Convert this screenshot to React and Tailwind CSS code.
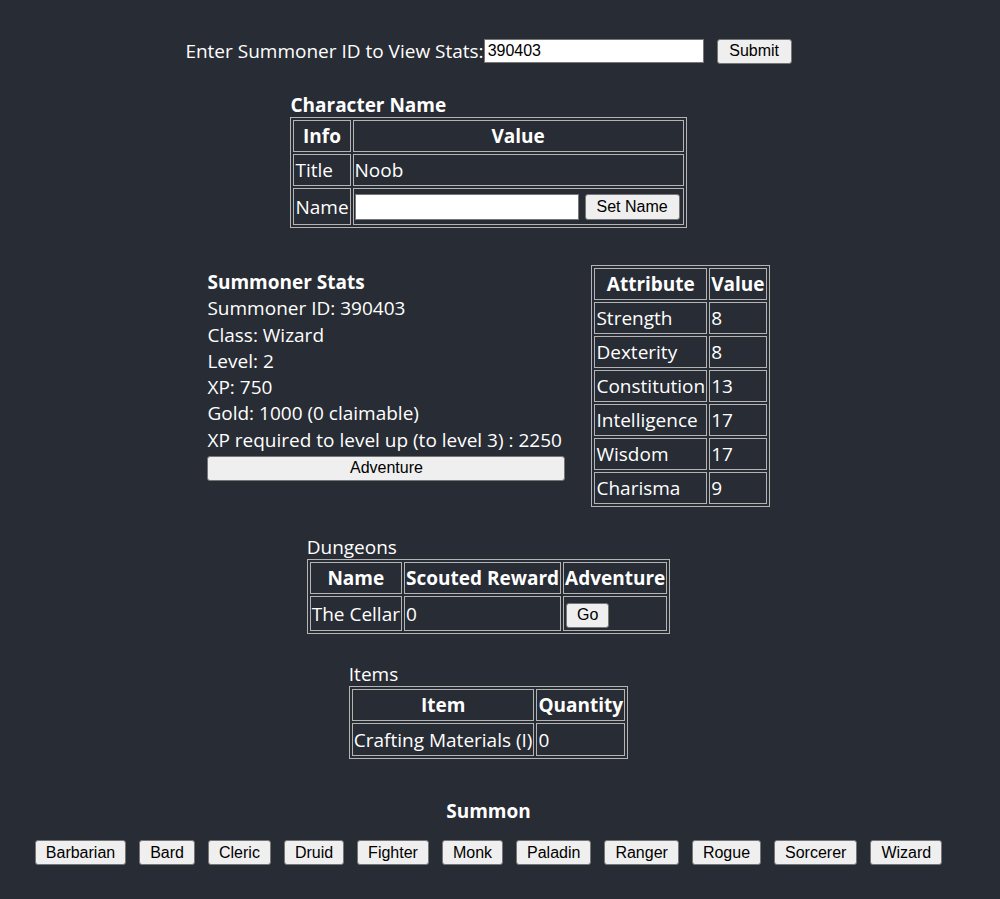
const body = '[font-family:"Open_Sans","Noto_Sans",sans-serif]'
const btnFont = '[font-family:"Liberation_Sans",Arial,sans-serif]'

function Btn({ children, className = '' }) {
  return (
    <button
      className={`h-[25px] px-[10px] bg-[#efefef] text-black text-[16px] leading-none border border-[#767676] rounded-[3px] ${btnFont} ${className}`}
    >
      {children}
    </button>
  )
}

function Th({ children, className = '' }) {
  return <th className={`border border-[#b4b4b4] p-[1px] h-[32px] font-bold ${className}`}>{children}</th>
}

function Td({ children, className = '' }) {
  return <td className={`border border-[#b4b4b4] p-[1px] h-[32px] text-left ${className}`}>{children}</td>
}

function Table({ children }) {
  return (
    <table className="border border-[#b4b4b4] border-separate border-spacing-[2px] leading-[28px]">
      <tbody>{children}</tbody>
    </table>
  )
}

const attributes = [
  ['Strength', 8],
  ['Dexterity', 8],
  ['Constitution', 13],
  ['Intelligence', 17],
  ['Wisdom', 17],
  ['Charisma', 9],
]

const classes = ['Barbarian', 'Bard', 'Cleric', 'Druid', 'Fighter', 'Monk', 'Paladin', 'Ranger', 'Rogue', 'Sorcerer', 'Wizard']

export default function App() {
  return (
    <div className={`bg-[#282c34] min-h-screen text-white text-[19px] ${body}`}>
      <div className="w-[977px] flex flex-col items-center pt-[39px] pb-[35px]">
        {/* Lookup form */}
        <div className="flex items-center h-[24px]">
          <span>Enter Summoner ID to View Stats:</span>
          <input
            defaultValue="390403"
            className={`w-[220px] h-[24px] bg-white text-black text-[16px] px-[3px] border border-[#767676] outline-none ${btnFont}`}
          />
          <Btn className="ml-[13px] w-[75px]">Submit</Btn>
        </div>

        {/* Character name */}
        <div className="mt-[30px]">
          <div className="font-bold leading-[24px]">Character Name</div>
          <Table>
            <tr>
              <Th>Info</Th>
              <Th>Value</Th>
            </tr>
            <tr>
              <Td>Title</Td>
              <Td>Noob</Td>
            </tr>
            <tr>
              <Td className="h-[37px]">Name</Td>
              <Td className="h-[37px]">
                <div className="flex items-center gap-[6px] pr-[2px]">
                  <input className="w-[224px] h-[26px] bg-white border border-[#767676] outline-none" />
                  <Btn className="w-[95px] h-[26px]">Set Name</Btn>
                </div>
              </Td>
            </tr>
          </Table>
        </div>

        {/* Stats and attributes */}
        <div className="mt-[37px] flex items-start gap-[26px]">
          <div className="mt-[4px] w-[358px] leading-[26.3px]">
            <div className="font-bold">Summoner Stats</div>
            <div>Summoner ID: 390403</div>
            <div>Class: Wizard</div>
            <div>Level: 2</div>
            <div>XP: 750</div>
            <div>Gold: 1000 (0 claimable)</div>
            <div className="whitespace-nowrap">XP required to level up (to level 3) : 2250</div>
            <Btn className="w-full h-[24px]">Adventure</Btn>
          </div>
          <Table>
            <tr>
              <Th>Attribute</Th>
              <Th>Value</Th>
            </tr>
            {attributes.map(([name, value]) => (
              <tr key={name}>
                <Td>{name}</Td>
                <Td>{value}</Td>
              </tr>
            ))}
          </Table>
        </div>

        {/* Dungeons */}
        <div className="mt-[28px]">
          <div className="leading-[24px]">Dungeons</div>
          <Table>
            <tr>
              <Th>Name</Th>
              <Th>Scouted Reward</Th>
              <Th>Adventure</Th>
            </tr>
            <tr>
              <Td className="h-[35px]">The Cellar</Td>
              <Td className="h-[35px]">0</Td>
              <Td className="h-[35px]">
                <Btn className="ml-[1px] w-[43px] h-[25px]">Go</Btn>
              </Td>
            </tr>
          </Table>
        </div>

        {/* Items */}
        <div className="mt-[28px]">
          <div className="leading-[24px]">Items</div>
          <Table>
            <tr>
              <Th>Item</Th>
              <Th>Quantity</Th>
            </tr>
            <tr>
              <Td className="h-[33px]">Crafting Materials (I)</Td>
              <Td className="h-[33px]">0</Td>
            </tr>
          </Table>
        </div>

        {/* Summon */}
        <div className="mt-[40px] font-bold leading-[24px]">Summon</div>
        <div className="mt-[17px] flex gap-[13px]">
          {classes.map((c) => (
            <Btn key={c}>{c}</Btn>
          ))}
        </div>
      </div>
    </div>
  )
}
